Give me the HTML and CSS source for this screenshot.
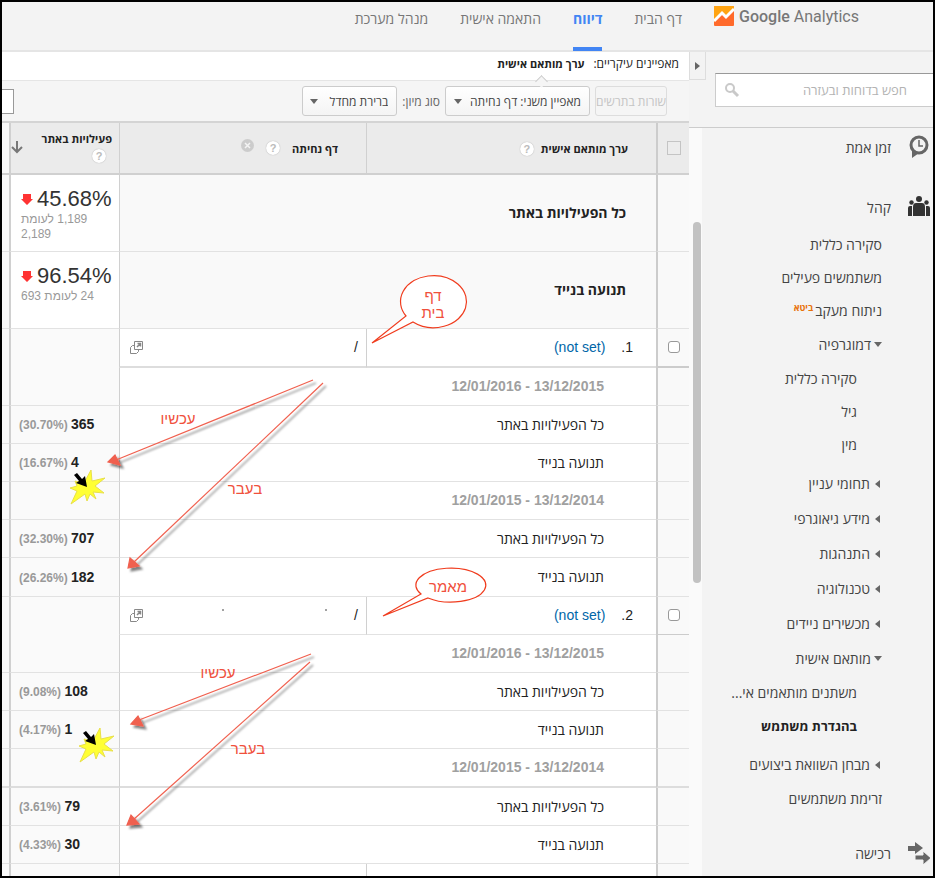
FILE: index.html
```html
<!DOCTYPE html>
<html lang="he" dir="rtl">

<head>
    <meta charset="UTF-8">
    <title>Google Analytics</title>
    <link rel="stylesheet" href="styles.css">
</head>

<body>
    <header class="header">
        <a class="logo" href="#" dir="ltr">
            <svg width="20" height="20" viewBox="0 0 20 20">
                <rect width="20" height="20" rx="1" fill="#ff6a2b"/>
                <path d="M0 1q0-1 1-1h18q1 0 1 1v2l-7 8-4-4-9 9z" fill="#ffa413"/>
                <path d="M0 15l8-8 4 4 8-8" fill="none" stroke="#fff" stroke-width="3"/>
            </svg>
            <span><b>Google</b> Analytics</span>
        </a>
        <nav class="nav">
            <a href="#">דף הבית</a>
            <a href="#" class="active">דיווח</a>
            <a href="#">התאמה אישית</a>
            <a href="#">מנהל מערכת</a>
        </nav>
    </header>

    <div class="page">
        <aside class="sidebar">
            <button class="toggle" type="button" aria-label="הסתר תפריט"></button>
            <div class="search">
                <input type="text" placeholder="חפש בדוחות ובעזרה" aria-label="חפש בדוחות ובעזרה">
                <svg width="16" height="16" viewBox="0 0 16 16" fill="none" stroke="#c9c9c9">
                    <circle cx="6" cy="6" r="4" stroke-width="2"/>
                    <path d="M9 9l5 5" stroke-width="3"/>
                </svg>
            </div>
            <div class="side-body">
                <ul class="menu">
                    <li class="section first"><svg width="22" height="24" viewBox="0 0 22 24">
                            <circle cx="11" cy="10" r="8" fill="none" stroke="#666" stroke-width="3"/>
                            <path d="M4 15v8l7-5z" fill="#666"/>
                            <path d="M11 5v6h4" fill="none" stroke="#666" stroke-width="1.5"/>
                        </svg><a href="#">זמן אמת</a></li>
                    <li class="section"><svg width="22" height="24" viewBox="0 0 22 24" fill="#333">
                            <circle cx="11" cy="4" r="3"/>
                            <circle cx="3.500" cy="7.500" r="2.200"/>
                            <circle cx="18.500" cy="7.500" r="2.200"/>
                            <path d="M5 21v-9q0-4 3-4h6q3 0 3 4v9z"/>
                            <path d="M0 21v-8q0-2 2-2h2v10zM22 21v-8q0-2-2-2h-2v10z"/>
                        </svg><a href="#">קהל</a></li>
                    <li><a href="#">סקירה כללית</a></li>
                    <li><a href="#">משתמשים פעילים</a></li>
                    <li><a href="#">ניתוח מעקב</a><sup>ביטא</sup></li>
                    <li class="group open"><a href="#">דמוגרפיה</a></li>
                    <li class="sub"><a href="#">סקירה כללית</a></li>
                    <li class="sub"><a href="#">גיל</a></li>
                    <li class="sub last"><a href="#">מין</a></li>
                    <li class="group"><a href="#">תחומי עניין</a></li>
                    <li class="group"><a href="#">מידע גיאוגרפי</a></li>
                    <li class="group"><a href="#">התנהגות</a></li>
                    <li class="group"><a href="#">טכנולוגיה</a></li>
                    <li class="group"><a href="#">מכשירים ניידים</a></li>
                    <li class="group open"><a href="#">מותאם אישית</a></li>
                    <li class="sub"><a href="#">משתנים מותאמים אי...</a></li>
                    <li class="sub last current"><a href="#">בהגדרת משתמש</a></li>
                    <li class="group"><a href="#">מבחן השוואת ביצועים</a></li>
                    <li><a href="#">זרימת משתמשים</a></li>
                    <li class="section bottom"><svg width="22" height="24" viewBox="0 0 22 24" fill="#666">
                            <path d="M0 5h7V1l8 6-8 6V10H0z"/>
                            <path d="M7 14h8v-4l8 7-8 7v-5H7z" stroke="#f3f3f3"/>
                        </svg><a href="#">רכישה</a></li>
                </ul>
                <div class="scrollbar"><div class="thumb"></div></div>
            </div>
        </aside>

        <main class="main">
            <div class="dimensions">
                <span>מאפיינים עיקריים:</span>
                <a href="#">ערך מותאם אישית</a>
            </div>
            <div class="toolbar">
                <button class="btn plot" type="button" disabled>שורות בתרשים</button>
                <button class="btn arrow" type="button">מאפיין משני: דף נחיתה</button>
                <label for="sort">סוג מיון:</label>
                <span class="select">
                    <select class="btn" id="sort">
                        <option>ברירת מחדל</option>
                    </select>
                </span>
                <input class="filter" type="text" aria-label="חיפוש בטבלה">
            </div>

            <table class="report">
                <colgroup>
                    <col class="c-check">
                    <col class="c-value">
                    <col>
                    <col class="c-metric">
                    <col class="c-more">
                </colgroup>
                <thead>
                    <tr>
                        <th class="check"><input type="checkbox" aria-label="בחר הכל"></th>
                        <th class="value">ערך מותאם אישית <i class="help">?</i></th>
                        <th class="landing"><div>דף נחיתה <i class="help">?</i>
                            <svg width="13" height="18" viewBox="0 0 13 18">
                                <circle cx="6.500" cy="6.500" r="6.500" fill="#ccc"/>
                                <path d="M4 4l5 5M9 4l-5 5" stroke="#f4f4f4" stroke-width="1.500"/>
                            </svg></div></th>
                        <th class="metric"><div>פעילויות באתר <i class="help">?</i>
                            <svg class="sort-arrow" width="12" height="13" viewBox="0 0 12 13" fill="none" stroke="#777" stroke-width="2">
                                <path d="M6 0v11M1 6l5 5 5-5"/>
                            </svg></div></th>
                        <th class="more"></th>
                    </tr>
                </thead>
                <tbody>
                    <tr class="total">
                        <td class="check"></td>
                        <td class="name" colspan="2">כל הפעילויות באתר</td>
                        <td class="metric">
                            <div class="big" dir="ltr"><svg width="12" height="11" viewBox="0 0 12 11"><path d="M2 0h8v5h2l-6 6-6-6h2z" fill="#f33"/></svg>45.68%</div>
                            <p>1,189 לעומת 2,189</p>
                        </td>
                        <td class="more"></td>
                    </tr>
                    <tr class="total">
                        <td class="check"></td>
                        <td class="name" colspan="2">תנועה בנייד</td>
                        <td class="metric">
                            <div class="big" dir="ltr"><svg width="12" height="11" viewBox="0 0 12 11"><path d="M2 0h8v5h2l-6 6-6-6h2z" fill="#f33"/></svg>96.54%</div>
                            <p>24 לעומת 693</p>
                        </td>
                        <td class="more"></td>
                    </tr>
                    <tr class="item thick">
                        <td class="check"><input type="checkbox" aria-label="שורה 1"></td>
                        <td class="value"><span>1.</span><a href="#" dir="ltr">(not set)</a></td>
                        <td class="landing"><div>/ <svg width="13" height="13" viewBox="0 0 13 13" fill="none" stroke="#888"><path d="M4.500 .5h8v8h-8zM4 4.500H2.500l-2 2v6h6l2-2V9"/><path d="M7 6l3-3M7.500 2.500h3v3" stroke-width="1.500"/></svg></div></td>
                        <td class="metric" rowspan="2"></td>
                        <td class="more" rowspan="2"></td>
                    </tr>
                    <tr>
                        <td class="check"></td>
                        <td class="name date" colspan="2">13/12/2015 - 12/01/2016</td>
                    </tr>
                    <tr>
                        <td class="check"></td>
                        <td class="name" colspan="2">כל הפעילויות באתר</td>
                        <td class="metric"><b>365</b> (30.70%)</td>
                        <td class="more"></td>
                    </tr>
                    <tr>
                        <td class="check"></td>
                        <td class="name" colspan="2">תנועה בנייד</td>
                        <td class="metric"><b>4</b> (16.67%)</td>
                        <td class="more"></td>
                    </tr>
                    <tr>
                        <td class="check"></td>
                        <td class="name date" colspan="2">13/12/2014 - 12/01/2015</td>
                        <td class="metric"></td>
                        <td class="more"></td>
                    </tr>
                    <tr>
                        <td class="check"></td>
                        <td class="name" colspan="2">כל הפעילויות באתר</td>
                        <td class="metric"><b>707</b> (32.30%)</td>
                        <td class="more"></td>
                    </tr>
                    <tr class="end">
                        <td class="check"></td>
                        <td class="name" colspan="2">תנועה בנייד</td>
                        <td class="metric"><b>182</b> (26.26%)</td>
                        <td class="more"></td>
                    </tr>
                    <tr class="item">
                        <td class="check"><input type="checkbox" aria-label="שורה 2"></td>
                        <td class="value"><span>2.</span><a href="#" dir="ltr">(not set)</a></td>
                        <td class="landing"><div>/ <svg width="13" height="13" viewBox="0 0 13 13" fill="none" stroke="#888"><path d="M4.500 .5h8v8h-8zM4 4.500H2.500l-2 2v6h6l2-2V9"/><path d="M7 6l3-3M7.500 2.500h3v3" stroke-width="1.500"/></svg></div></td>
                        <td class="metric" rowspan="2"></td>
                        <td class="more" rowspan="2"></td>
                    </tr>
                    <tr>
                        <td class="check"></td>
                        <td class="name date" colspan="2">13/12/2015 - 12/01/2016</td>
                    </tr>
                    <tr>
                        <td class="check"></td>
                        <td class="name" colspan="2">כל הפעילויות באתר</td>
                        <td class="metric"><b>108</b> (9.08%)</td>
                        <td class="more"></td>
                    </tr>
                    <tr>
                        <td class="check"></td>
                        <td class="name" colspan="2">תנועה בנייד</td>
                        <td class="metric"><b>1</b> (4.17%)</td>
                        <td class="more"></td>
                    </tr>
                    <tr class="thick">
                        <td class="check"></td>
                        <td class="name date" colspan="2">13/12/2014 - 12/01/2015</td>
                        <td class="metric"></td>
                        <td class="more"></td>
                    </tr>
                    <tr>
                        <td class="check"></td>
                        <td class="name" colspan="2">כל הפעילויות באתר</td>
                        <td class="metric"><b>79</b> (3.61%)</td>
                        <td class="more"></td>
                    </tr>
                    <tr>
                        <td class="check"></td>
                        <td class="name" colspan="2">תנועה בנייד</td>
                        <td class="metric"><b>30</b> (4.33%)</td>
                        <td class="more"></td>
                    </tr>
                    <tr class="item">
                        <td class="check"></td>
                        <td class="value"></td>
                        <td class="landing"><div><svg width="13" height="13" viewBox="0 0 13 13" fill="none" stroke="#888"><path d="M4.500 .5h8v8h-8z"/></svg></div></td>
                        <td class="metric"></td>
                        <td class="more"></td>
                    </tr>
                </tbody>
            </table>
        </main>
    </div>

    <!-- arrows and notes over the table -->
    <svg class="notes" width="688" height="874" viewBox="2 2 688 874">
        <defs>
            <filter id="shadow" x="-10%" y="-10%" width="120%" height="120%">
                <feDropShadow dx="3" dy="3" stdDeviation="1" flood-color="#000" flood-opacity=".5"/>
            </filter>
            <path id="burst" d="M5-17l1 11 13-3-10 8 9 7-11-1 3 7-6-5-3 7-2-7-14 10 6-13-7-3 7-2-2-5 9 2z" fill="#ff3" stroke="#e8e04a"/>
            <path id="cursor" d="M0 0l-11-4 3-2-5-6 3-2 5 6 3-3z" fill="#000"/>
        </defs>
        <g filter="url(#shadow)" stroke="#f0604f" stroke-width="1.200" fill="#f0604f">
            <path d="M313 380L116 460"/>
            <path d="M108 462l7-7 5 10z"/>
            <path d="M323 383L134 562"/>
            <path d="M128 568l2-10 9 8z"/>
            <path d="M311 654L139 720"/>
            <path d="M131 724l7-8 5 10z"/>
            <path d="M310 662L133 820"/>
            <path d="M127 825l4-10 8 9z"/>
        </g>
        <g fill="#fff" stroke="#f03c1e" stroke-width="1.200">
            <path d="M406 316A33 26 0 1 1 413 322L372 343Z"/>
            <path d="M421 594A35 17 0 1 1 428 598L383 616Z"/>
        </g>
        <use href="#burst" x="86" y="487"/>
        <use href="#cursor" x="87" y="487"/>
        <use href="#burst" x="95" y="745"/>
        <use href="#cursor" x="96" y="745"/>
        <path d="M222 610h2M325 610h2" stroke="#444"/>
        <g class="note-text">
            <text x="178" y="424">עכשיו</text>
            <text x="245" y="494">בעבר</text>
            <text x="218" y="678">עכשיו</text>
            <text x="248" y="754">בעבר</text>
            <text x="433" y="301">דף</text>
            <text x="433" y="318">בית</text>
            <text x="448" y="592">מאמר</text>
        </g>
    </svg>
</body>

</html>
```

FILE: styles.css
```css
* {
    box-sizing: border-box;
}

body {
    margin: 0;
    height: 100vh;
    border: 2px solid #000;
    overflow: hidden;
    position: relative;
    display: flex;
    flex-direction: column;
    background: #f3f3f3;
    color: #222;
    font-family: "Open Sans", "Liberation Sans", sans-serif;
    font-size: 14px;
}

a {
    color: inherit;
    text-decoration: none;
}

button,
select,
input {
    font-family: inherit;
    margin: 0;
}

/* Header */
.header {
    display: flex;
    flex: none;
    gap: 32px;
    height: 50px;
    padding-right: 74px;
    border-bottom: 2px solid #e5e5e5;
}

.logo {
    display: flex;
    gap: 5px;
    padding-top: 4px;
    font: 16px/22px Roboto, sans-serif;
    color: #777;
}

.logo b {
    font-weight: 500;
}

.nav {
    display: flex;
    gap: 32px;
    line-height: 34px;
    color: #777;
}

.nav a {
    height: 49px;
}

.nav .active {
    color: #4285f4;
    font-weight: bold;
    border-bottom: 4px solid #4285f4;
}

.page {
    display: flex;
    flex: 1;
    min-height: 0;
}

/* Sidebar */
.sidebar {
    position: relative;
    flex: none;
    width: 244px;
    display: flex;
    flex-direction: column;
}

.toggle {
    position: absolute;
    left: 0;
    top: 0;
    width: 17px;
    height: 28px;
    padding: 0;
    border: 1px solid #ddd;
    border-top: 0;
    background: #f3f3f3;
}

.toggle::before {
    content: "";
    display: block;
    width: 0;
    margin: 0 auto;
    border: 4px solid transparent;
    border-left: 5px solid #666;
    border-right: 0;
}

.search {
    display: flex;
    align-items: center;
    height: 34px;
    margin: 21px 0 20px;
    margin-left: 26px;
    padding: 0 26px 0 8px;
    background: #fff;
    border: 1px solid #ccc;
    border-top: 1px solid #999;
    border-right: 0;
}

.search input {
    flex: 1;
    min-width: 0;
    padding: 0;
    border: 0;
    background: none;
    font-size: 13px;
}

.search input::placeholder {
    color: #b3b3b3;
}

.side-body {
    flex: 1;
    min-height: 0;
    display: flex;
    border-top: 1px solid #ccc;
}

.menu {
    flex: 1;
    margin: 0;
    padding: 0;
    list-style: none;
    color: #444;
}

.menu li {
    display: flex;
    align-items: center;
    height: 33px;
    padding-right: 51px;
    white-space: nowrap;
}

.menu .section {
    height: 42px;
    margin-top: 20px;
    padding-right: 3px;
    gap: 17px;
}

.menu .first {
    height: 38px;
    margin-top: 0;
}

.menu .bottom {
    margin-top: 17px;
}

.menu .sub {
    padding-right: 76px;
}

.menu .last {
    margin-bottom: 5px;
}

.menu .current {
    font-size: 13px;
    font-weight: bold;
    color: #222;
}

.menu .group {
    height: 35px;
    gap: 3px;
}

.menu .group::before {
    content: "";
    margin: 0 2px;
    border: 4px solid transparent;
    border-right: 5px solid #666;
    border-left: 0;
}

.menu .open::before {
    margin: 0;
    border: 4px solid transparent;
    border-top: 5px solid #666;
    border-bottom: 0;
}

.menu sup {
    margin: 0 2px 6px;
    font-size: 9px;
    line-height: 10px;
    font-weight: bold;
    color: #e8710a;
}

.scrollbar {
    width: 13px;
    padding: 94px 1px 0 4px;
    background: #fafafa;
}

.thumb {
    width: 8px;
    height: 361px;
    border-radius: 4px;
    background: #c2c2c2;
}

/* Main area */
.main {
    flex: 1;
    min-width: 0;
    background: #fff;
}

.dimensions {
    display: flex;
    gap: 9px;
    height: 29px;
    padding-right: 10px;
    font-size: 12px;
    line-height: 24px;
    border-bottom: 1px solid #e5e5e5;
}

.dimensions a {
    position: relative;
    font-size: 11px;
    font-weight: bold;
}

/* notch under the chosen dimension */
.dimensions a::after {
    content: "";
    position: absolute;
    left: 50%;
    top: 25px;
    width: 8px;
    height: 8px;
    margin-left: -4px;
    background: #f5f5f5;
    border: 1px solid #ccc;
    border-right: 0;
    border-bottom: 0;
    transform: rotate(45deg);
}

.toolbar {
    display: flex;
    align-items: center;
    gap: 5px;
    height: 40px;
    padding-right: 22px;
    background: #f5f5f5;
    font-size: 12px;
    color: #666;
}

.btn {
    height: 30px;
    padding: 0 8px;
    border: 1px solid #ccc;
    border-radius: 3px;
    background: linear-gradient(#fff, #f4f4f4);
    color: #444;
    font-size: 12px;
    white-space: nowrap;
}

.plot {
    width: 72px;
    padding: 0;
    background: #f5f5f5;
    border-color: #ddd;
    color: #c4c4c4;
    overflow: hidden;
}

.arrow {
    display: flex;
    align-items: center;
    gap: 8px;
}

.arrow::after,
.select::after {
    content: "";
    border: 4px solid transparent;
    border-top: 5px solid #666;
    border-bottom: 0;
}

.select {
    position: relative;
}

.select .btn {
    appearance: none;
    padding-left: 26px;
}

.select::after {
    position: absolute;
    left: 8px;
    top: 13px;
    pointer-events: none;
}

/* only the end of the filter box stays in view */
.filter {
    width: 30px;
    height: 25px;
    margin-right: auto;
    margin-left: -18px;
    border: 1px solid #999;
    background: #fff;
}

.report {
    width: 100%;
    table-layout: fixed;
    border-spacing: 0;
    border-top: 2px solid #d4d4d4;
}

.c-check {
    width: 33px;
}

.c-value {
    width: 290px;
}

.c-metric {
    width: 110px;
}

.c-more {
    width: 7px;
}

.report th,
.report td {
    padding: 0;
    text-align: right;
    border-bottom: 1px solid #e2e2e2;
}

.report td {
    height: 38px;
    padding-bottom: 1px;
}

.report th {
    height: 52px;
    background: #ebebeb;
    font-size: 11px;
    border-bottom: 2px solid #d0d0d0;
}

.report .check {
    text-align: center;
    background: #f9f9f9;
    border-left: 2px solid #ccc;
}

.report th.check {
    background: #ebebeb;
}

.report .value {
    padding-right: 28px;
    border-left: 1px solid #d0d0d0;
}

.report td.value,
.report td.landing {
    padding-right: 23px;
    font-family: "Liberation Sans", sans-serif;
}

.value a {
    margin-right: 16px;
    color: #0066a8;
}

.report .name {
    padding-right: 52px;
    border-left: 1px solid #d0d0d0;
}

.report .landing,
.report td.landing {
    padding-right: 8px;
    border-left: 1px solid #d0d0d0;
}

.report th.landing {
    padding-right: 28px;
}

.landing div {
    display: flex;
    align-items: center;
    justify-content: space-between;
    padding-left: 10px;
}

th.landing div {
    justify-content: flex-start;
    gap: 12px;
    padding: 0;
}

.report .metric {
    padding-left: 8px;
    text-align: left;
    background: #fafafa;
    border-left: 2px solid #d0d0d0;
    font-family: "Liberation Sans", sans-serif;
    font-size: 12px;
    font-weight: bold;
    color: #999;
}

.metric b {
    color: #222;
    font-size: 14px;
}

.report th.metric {
    position: relative;
    padding: 0 7px;
    background: #ebebeb;
    color: #222;
    text-align: right;
    vertical-align: top;
    font-family: "Open Sans", sans-serif;
    font-size: 11px;
}

th.metric div {
    display: flex;
    flex-direction: column;
    padding-top: 6px;
    line-height: 20px;
}

th.metric .help {
    margin-right: 6px;
}

.sort-arrow {
    position: absolute;
    left: 0;
    top: 18px;
}

.report .more {
    background: #fafafa;
}

.report .total td {
    height: 77px;
    background: #f9f9f9;
}

.total .name {
    padding-right: 30px;
    font-weight: bold;
}

.report .total .metric {
    background: #fff;
    padding-left: 10px;
    padding-top: 11px;
    vertical-align: top;
    font-weight: normal;
}

.total .big {
    display: flex;
    align-items: center;
    gap: 4px;
    font-size: 22px;
    line-height: 26px;
    color: #333;
}

.total p {
    width: 80px;
    margin: 0 auto 0 0;
    line-height: 15px;
}

.report .thick td {
    height: 39px;
    border-bottom: 2px solid #ddd;
}

.report .end td {
    height: 39px;
}

.report .thick td[rowspan] {
    border-bottom: 1px solid #e2e2e2;
}

.report .item .check {
    border-bottom-color: #ccc;
}

.report .date {
    font-family: "Liberation Sans", sans-serif;
    font-weight: bold;
    color: #a0a0a0;
}

.help {
    display: inline-block;
    width: 14px;
    height: 14px;
    margin-right: 4px;
    border-radius: 50%;
    background: #fff;
    box-shadow: 0 0 1px #999;
    color: #bbb;
    font: bold 11px/14px "Liberation Sans", sans-serif;
    text-align: center;
}

th.landing .help {
    margin: 0;
}

input[type="checkbox"] {
    appearance: none;
    display: block;
    width: 12px;
    height: 12px;
    margin: 0 auto;
    border: 1px solid #999;
    border-radius: 3px;
    background: #fff;
}

th input[type="checkbox"] {
    width: 14px;
    height: 14px;
    border-color: #c4c4c4;
    border-radius: 0;
    background: #ececec;
}

/* Notes layer */
.notes {
    position: absolute;
    left: 0;
    top: 0;
    pointer-events: none;
}

.note-text {
    fill: #f0503c;
    font-family: "Liberation Sans", sans-serif;
    font-size: 15px;
    text-anchor: middle;
}
```
